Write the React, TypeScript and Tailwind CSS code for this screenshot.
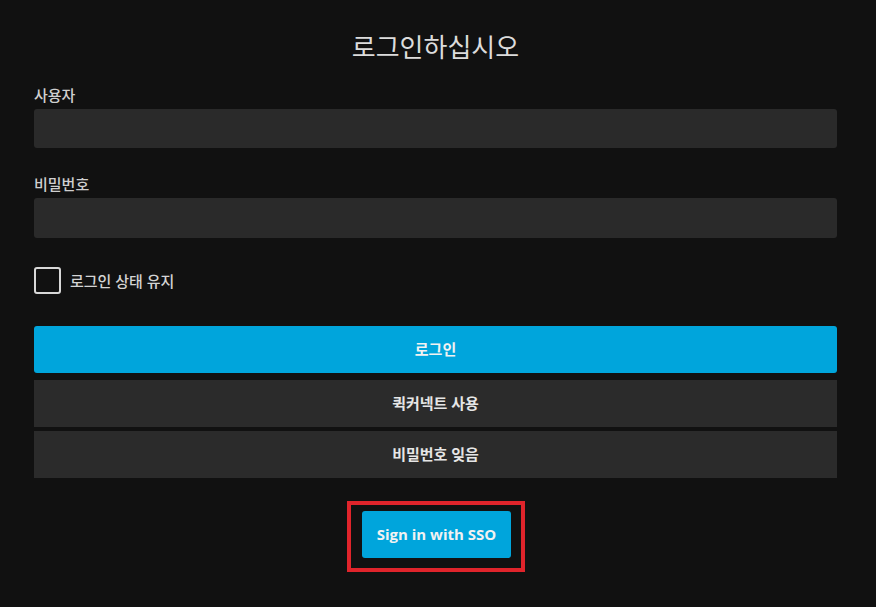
import React from 'react';

const font = { fontFamily: '"Open Sans", "Noto Sans CJK KR", sans-serif' };

export default function App() {
  return (
    <div className="min-h-[607px] w-full bg-[#111111] text-[#d4d4d4]" style={font}>
      <div className="ml-[34px] w-[803px] pt-[29px]">
        <h1 className="text-center text-[26px] leading-[36px] text-[#dcdcdc]">로그인하십시오</h1>

        <label className="mt-[20px] block text-[15px] font-medium leading-[20px] text-[#cfcfcf]">사용자</label>
        <input className="mt-[4px] block h-[39px] w-full rounded-[3px] bg-[#2a2a2a] px-3 text-[14px] text-white outline-none" />

        <label className="mt-[26px] block text-[15px] font-medium leading-[20px] text-[#cfcfcf]">비밀번호</label>
        <input type="password" className="mt-[4px] block h-[40px] w-full rounded-[3px] bg-[#2a2a2a] px-3 text-[14px] text-white outline-none" />

        <div className="mt-[29px] flex items-center gap-[9px]">
          <span className="block h-[27px] w-[27px] rounded-[3px] border-2 border-[#d8d8d8]" />
          <span className="text-[15px] font-medium leading-[20px] text-[#d4d4d4]">로그인 상태 유지</span>
        </div>

        <button className="mt-[32px] block h-[47px] w-full rounded-[3px] bg-[#00a5dc] text-[15px] font-bold text-[#f2f2f2]">
          로그인
        </button>
        <button className="mt-[7px] block h-[47px] w-full bg-[#2b2b2b] text-[15px] font-bold text-[#e6e6e6]">
          퀵커넥트 사용
        </button>
        <button className="mt-[4px] block h-[47px] w-full bg-[#2b2b2b] text-[15px] font-bold text-[#e6e6e6]">
          비밀번호 잊음
        </button>

        <div className="mt-[23px] flex justify-center pl-[1px]">
          <div className="border-4 border-[#e0242b] pb-[10px] pl-[11px] pr-[10px] pt-[6px]">
            <button className="block h-[47px] w-[149px] rounded-[3px] bg-[#00a5dc] text-[15px] font-bold text-[#f2f2f2]">
              Sign in with SSO
            </button>
          </div>
        </div>
      </div>
    </div>
  );
}
